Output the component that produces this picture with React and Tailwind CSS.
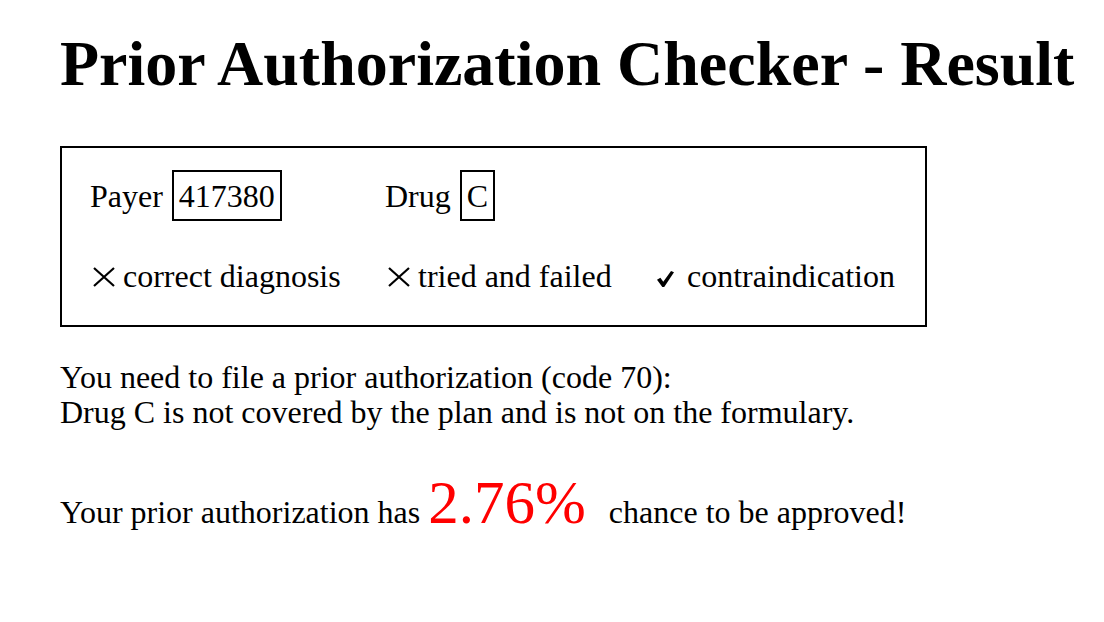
import React from 'react'

function Cross() {
  return (
    <svg width="24" height="20" viewBox="0 0 24 20" className="block shrink-0 ml-[2px] self-end mb-[7px]">
      <path d="M2 1 L22 19 M22 1 L2 19" stroke="black" strokeWidth="2.2" fill="none" />
    </svg>
  )
}

function Check() {
  return (
    <svg width="17" height="16" viewBox="0 0 16 15" className="block shrink-0 ml-[2px] self-end mb-[7px]">
      <path d="M0 8.2 L3.2 6.3 L5.9 10 L13.2 0 L16 1.2 L6.8 15 L5 15 Z" fill="black" />
    </svg>
  )
}

function Criterion({ ok, label, gap }) {
  return (
    <div className="flex items-baseline">
      {ok ? <Check /> : <Cross />}
      <span className={gap}>{label}</span>
    </div>
  )
}

export default function App() {
  return (
    <div
      className="w-[1104px] h-[622px] bg-white text-black px-[60px] pt-[28px]"
      style={{ fontFamily: '"Liberation Serif", "Times New Roman", serif' }}
    >
      <h1 className="text-[64px] leading-[72px] font-bold whitespace-nowrap">
        Prior Authorization Checker - Result
      </h1>

      {/* Request summary */}
      <div className="mt-[46px] w-[867px] border-2 border-black pl-[28px] pt-[22px] pb-[31px] text-[32px] leading-[36px]">
        <div className="grid grid-cols-[295px_270px_auto] items-baseline">
          <div className="flex items-baseline gap-[9px]">
            <span>Payer</span>
            <span className="border-2 border-black px-[5px] py-[5.5px]">417380</span>
          </div>
          <div className="flex items-baseline gap-[9px]">
            <span>Drug</span>
            <span className="border-2 border-black px-[5px] py-[5.5px]">C</span>
          </div>
          <div />
        </div>
        <div className="grid grid-cols-[295px_270px_auto] mt-[37px] items-stretch">
          <Criterion ok={false} label="correct diagnosis" gap="ml-[7px]" />
          <Criterion ok={false} label="tried and failed" gap="ml-[7px]" />
          <Criterion ok label="contraindication" gap="ml-[13px]" />
        </div>
      </div>

      <div className="mt-[33px] text-[32px] leading-[35px]">
        <p>You need to file a prior authorization (code 70):</p>
        <p>Drug C is not covered by the plan and is not on the formulary.</p>
      </div>

      <div className="mt-[43px] flex items-baseline text-[32px] leading-[35px] whitespace-nowrap">
        <span>Your prior authorization has&nbsp;</span>
        <span className="text-[61px] leading-[60px] text-[#ff0000]">2.76%</span>
        <span className="ml-[23px]">chance to be approved!</span>
      </div>
    </div>
  )
}
